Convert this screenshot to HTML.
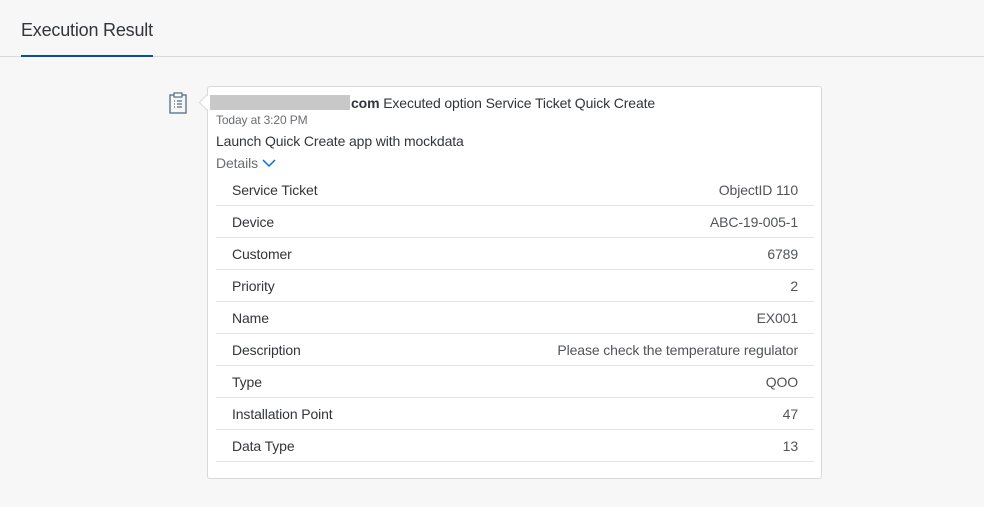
<!DOCTYPE html>
<html><head><style>
body{margin:0;width:984px;height:507px;background:#f7f7f7;font-family:"Liberation Sans",sans-serif;position:relative;overflow:hidden;color:#32363a}
.hdr{position:absolute;left:21px;top:20px;font-size:18px;color:#32363a;letter-spacing:-0.2px}
.line{position:absolute;left:0;top:56px;width:984px;height:1px;background:#d9d9d9}
.uline{position:absolute;left:21px;top:55px;width:132px;height:2px;background:#0a4f9e}
.card{position:absolute;left:207px;top:86px;width:615px;height:393px;background:#fff;border:1px solid #d9d9d9;border-radius:3px;box-sizing:border-box}
.arrow{position:absolute;left:201px;top:97px;width:10px;height:10px;background:#fff;border-left:1px solid #d9d9d9;border-bottom:1px solid #d9d9d9;transform:rotate(45deg)}
.t{position:absolute;font-size:14px;white-space:nowrap;letter-spacing:-0.12px}
.row{position:absolute;left:216px;width:598px;height:31px;border-bottom:1px solid #e5e5e5;font-size:14px;line-height:32px;letter-spacing:-0.12px}
.row span{position:absolute;left:16px}
.row b{position:absolute;right:16px;font-weight:normal;color:#515559}
</style></head><body>
<div class="hdr">Execution Result</div>
<div class="line"></div><div class="uline"></div>
<svg style="position:absolute;left:169px;top:92px" width="18" height="22" viewBox="0 0 18 22"><rect x="1" y="3" width="16" height="18" fill="none" stroke="#556b82" stroke-width="1.3"/><rect x="5" y="1" width="8" height="4" fill="#fff" stroke="#556b82" stroke-width="1.2"/><path d="M5 9h1M8 9h5M5 12h1M8 12h5M5 15h1M8 15h5" stroke="#556b82" stroke-width="1.2"/></svg>
<div class="card"></div><div class="arrow"></div>
<div style="position:absolute;left:210px;top:95px;width:140px;height:15px;background:#c8c8c8"></div>
<div class="t" style="left:351px;top:95px"><b>com</b> Executed option Service Ticket Quick Create</div>
<div class="t" style="left:216px;top:113px;font-size:12px;color:#6a6d70">Today at 3:20 PM</div>
<div class="t" style="left:216px;top:133px">Launch Quick Create app with mockdata</div>
<div class="t" style="left:216px;top:155px;color:#6a6d70">Details <svg width="14" height="10" viewBox="0 0 14 10"><path d="M1 2l6 6 6-6" fill="none" stroke="#0a6ed1" stroke-width="1.5"/></svg></div>
<div class="row" style="top:174px"><span>Service Ticket</span><b>ObjectID 110</b></div>
<div class="row" style="top:206px"><span>Device</span><b>ABC-19-005-1</b></div>
<div class="row" style="top:238px"><span>Customer</span><b>6789</b></div>
<div class="row" style="top:270px"><span>Priority</span><b>2</b></div>
<div class="row" style="top:302px"><span>Name</span><b>EX001</b></div>
<div class="row" style="top:334px"><span>Description</span><b>Please check the temperature regulator</b></div>
<div class="row" style="top:366px"><span>Type</span><b>QOO</b></div>
<div class="row" style="top:398px"><span>Installation Point</span><b>47</b></div>
<div class="row" style="top:430px"><span>Data Type</span><b>13</b></div>
</body></html>
